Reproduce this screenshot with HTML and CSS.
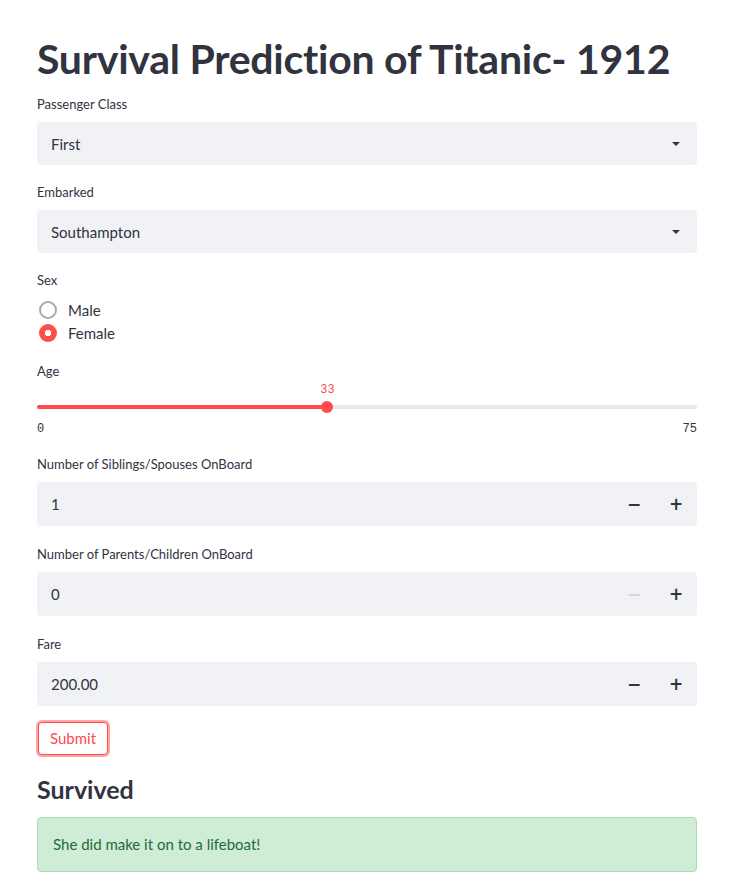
FILE: index.html
```html
<!DOCTYPE html>
<html>
<head>
<meta charset="utf-8">
<link rel="stylesheet" href="styles.css">
</head>
<body>
<main class="app">
  <h1 class="title">Survival Prediction of Titanic- 1912</h1>

  <div class="widget">
    <div class="label">Passenger Class</div>
    <div class="select">
      <span>First</span>
      <svg class="caret" width="10" height="6" viewBox="0 0 10 6"><path d="M1 1h8L5 5z" fill="#31333F"/></svg>
    </div>
  </div>

  <div class="widget">
    <div class="label">Embarked</div>
    <div class="select">
      <span>Southampton</span>
      <svg class="caret" width="10" height="6" viewBox="0 0 10 6"><path d="M1 1h8L5 5z" fill="#31333F"/></svg>
    </div>
  </div>

  <div class="widget">
    <div class="label">Sex</div>
    <div class="radios">
      <div class="radio"><span class="dot"></span><span>Male</span></div>
      <div class="radio"><span class="dot on"></span><span>Female</span></div>
    </div>
  </div>

  <div class="widget">
    <div class="label">Age</div>
    <div class="slider">
      <div class="value-row"><span class="value" style="left: 44%">33</span></div>
      <div class="track-row">
        <div class="track"><div class="fill" style="width: 44%"></div></div>
        <span class="thumb" style="left: 44%"></span>
      </div>
      <div class="ticks"><span>0</span><span>75</span></div>
    </div>
  </div>

  <div class="widget num">
    <div class="label">Number of Siblings/Spouses OnBoard</div>
    <div class="number">
      <div class="num-field">1</div>
      <div class="steps"><span class="step">&minus;</span><span class="step">+</span></div>
    </div>
  </div>

  <div class="widget num">
    <div class="label">Number of Parents/Children OnBoard</div>
    <div class="number">
      <div class="num-field">0</div>
      <div class="steps"><span class="step disabled">&minus;</span><span class="step">+</span></div>
    </div>
  </div>

  <div class="widget num">
    <div class="label">Fare</div>
    <div class="number">
      <div class="num-field">200.00</div>
      <div class="steps"><span class="step">&minus;</span><span class="step">+</span></div>
    </div>
  </div>

  <div class="widget">
    <button class="submit">Submit</button>
  </div>

  <h3 class="subheader">Survived</h3>
  <div class="success">She did make it on to a lifeboat!</div>
</main>
</body>
</html>
```

FILE: styles.css
```css
* { box-sizing: border-box; }
html, body { margin: 0; padding: 0; background: #fff; }
body {
  font-family: "Lato", "Noto Sans", "Liberation Sans", sans-serif;
  color: #31333F;
}
.app {
  width: 660px;
  margin-left: 37px;
  padding-top: 32px;
  display: flex;
  flex-direction: column;
}
.title {
  margin: 0;
  font-size: 41px;
  font-weight: 700;
  line-height: 53px;
  letter-spacing: -0.25px;
  white-space: nowrap;
}
.widget { margin-top: 8px; }
.widget + .widget { margin-top: 16px; }
.widget.num + .widget.num { margin-top: 17px; }
.label {
  font-size: 13px;
  line-height: 22px;
  height: 22px;
  margin-bottom: 7px;
}
.select {
  height: 43px;
  background: #F0F2F6;
  border-radius: 4px;
  display: flex;
  align-items: center;
  justify-content: space-between;
  padding: 0 16px 0 14px;
  font-size: 15px;
}
.caret { display: block; }
.radios { margin-top: 7px; display: flex; flex-direction: column; }
.radio {
  height: 23px;
  display: flex;
  align-items: center;
  gap: 11px;
  font-size: 15px;
}
.dot {
  width: 18px;
  height: 18px;
  border-radius: 50%;
  border: 2px solid #A8A9AF;
  margin-left: 2px;
  flex: none;
}
.dot.on {
  border: none;
  background: radial-gradient(circle, #fff 0 3px, #FF4B4B 3.5px);
}
.slider { display: flex; flex-direction: column; margin-top: -7px; }
.value-row { position: relative; height: 14px; margin-top: 1px; }
.value {
  position: absolute;
  top: 0;
  transform: translateX(-50%);
  font-family: "Liberation Mono", "DejaVu Sans Mono", monospace;
  font-size: 12px;
  line-height: 14px;
  color: #FF4B4B;
}
.track-row { position: relative; height: 12px; margin-top: 4px; display: flex; align-items: center; }
.track { width: 100%; height: 4px; background: #E6E8EE; border-radius: 2px; overflow: hidden; }
.fill { height: 100%; background: #FF4B4B; }
.thumb {
  position: absolute;
  top: 0;
  width: 12px;
  height: 12px;
  margin-left: -6px;
  border-radius: 50%;
  background: #FF4B4B;
}
.ticks {
  margin-top: 8px;
  height: 16px;
  display: flex;
  justify-content: space-between;
  font-family: "Liberation Mono", "DejaVu Sans Mono", monospace;
  font-size: 12px;
  line-height: 16px;
  color: #31333F;
}
.number {
  height: 44px;
  display: flex;
  border-radius: 4px;
  overflow: hidden;
  background: #F0F2F6;
}
.num-field {
  flex: 1;
  display: flex;
  align-items: center;
  padding-left: 14px;
  font-size: 15px;
}
.steps {
  width: 84px;
  display: flex;
}
.step {
  flex: 1;
  display: flex;
  align-items: center;
  justify-content: center;
  font-family: "DejaVu Sans", sans-serif;
  font-size: 17px;
  font-weight: 700;
  color: #31333F;
}
.step.disabled { color: #D2D5DC; }
.submit {
  height: 33px;
  padding: 0 11px;
  background: #fff;
  border: 1px solid #FF4B4B;
  border-radius: 4px;
  box-shadow: 0 0 0 2px rgba(255, 75, 75, 0.5);
  color: #FF4B4B;
  font-family: inherit;
  font-size: 15px;
  line-height: 1;
  margin-left: 1px;
}
.subheader {
  margin: 17px 0 0;
  font-size: 25px;
  font-weight: 700;
  line-height: 34px;
}
.success {
  margin-top: 11px;
  background: #CFEDD6;
  border: 1px solid #A6DDB4;
  border-radius: 4px;
  padding: 14px 15px;
  font-size: 15px;
  line-height: 25px;
  color: #1E6B3A;
}
```
